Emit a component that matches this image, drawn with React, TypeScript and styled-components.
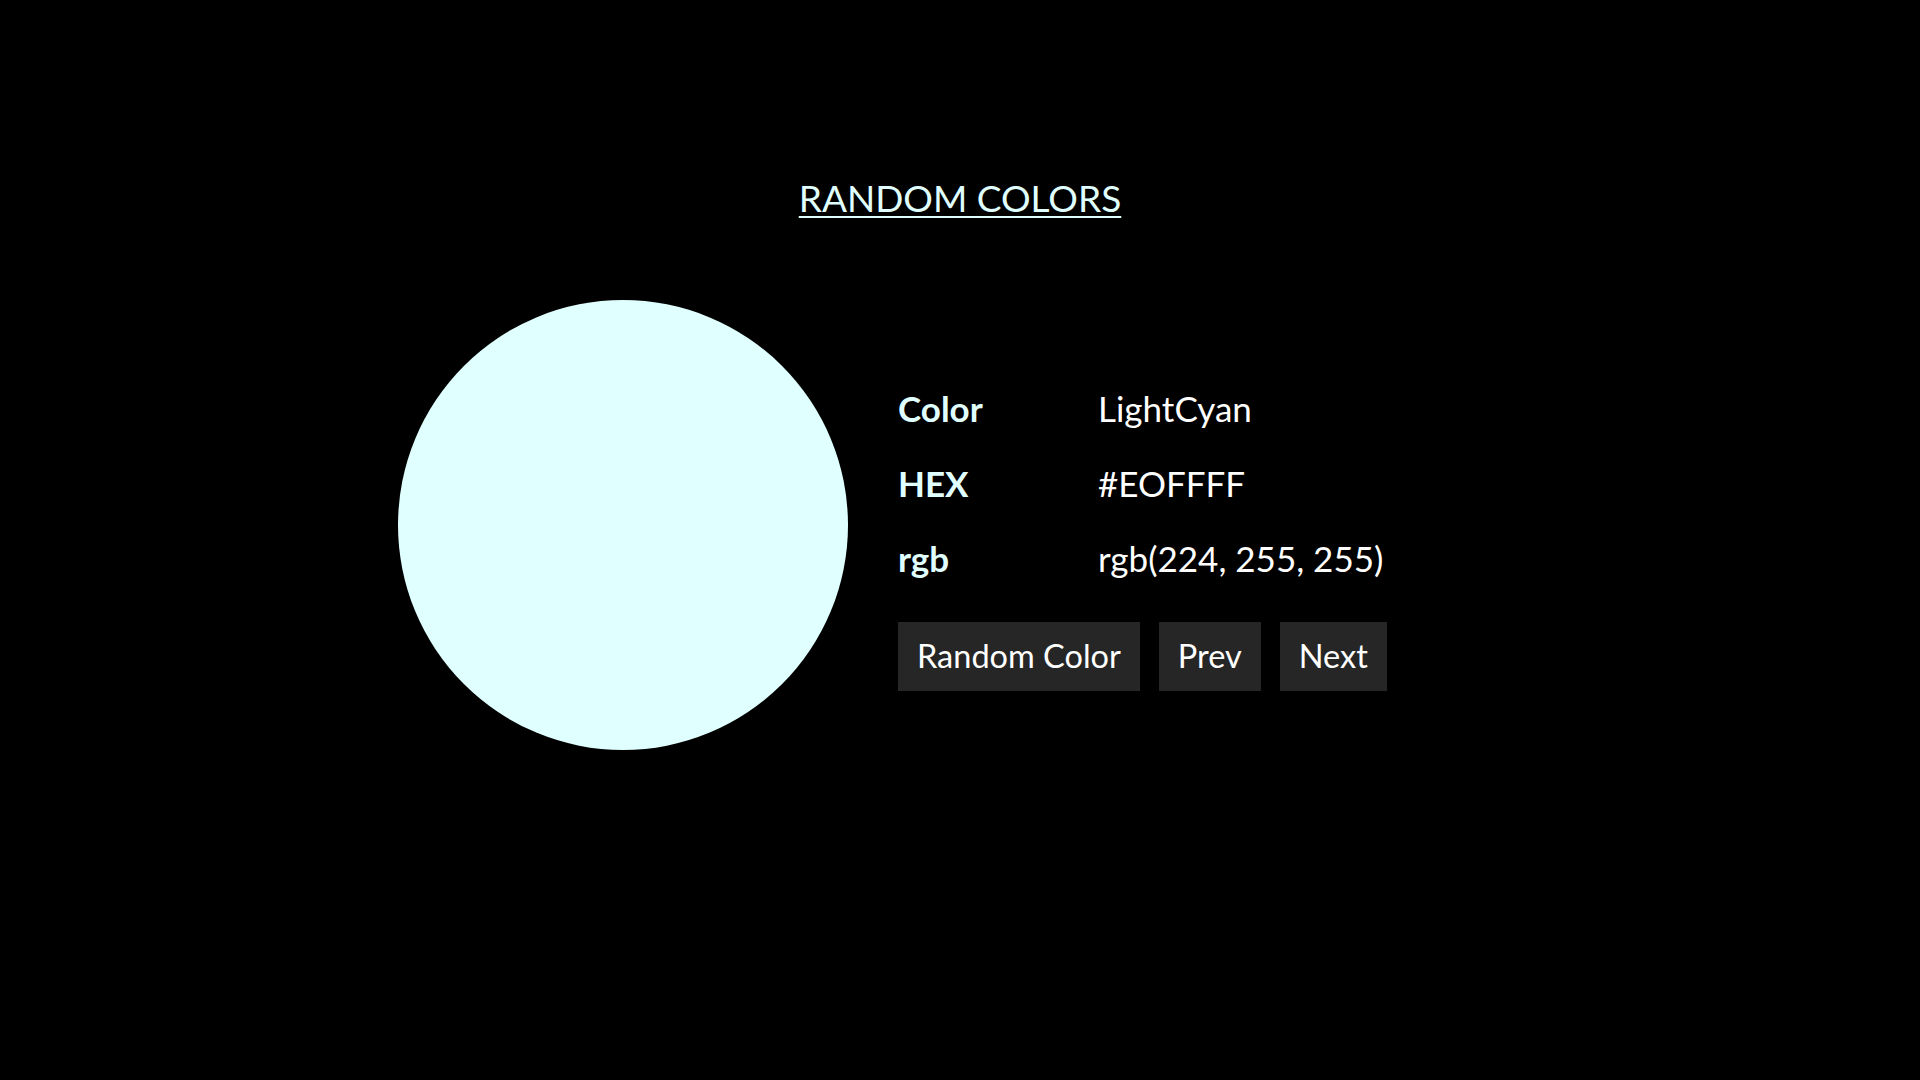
import React from "react";
import styled, { createGlobalStyle } from "styled-components";

const Global = createGlobalStyle`
  html, body { margin: 0; padding: 0; background: #000; }
  body { font-family: Lato, "Open Sans", sans-serif; color: #e0ffff; }
`;

const Page = styled.div`
  width: 1920px;
  min-height: 1080px;
  display: flex;
  flex-direction: column;
  align-items: center;
`;

const Title = styled.h1`
  margin: 176px 0 0;
  font-size: 37px;
  font-weight: 400;
  line-height: 1.2;
  text-decoration: underline;
  text-underline-offset: 4px;
  text-decoration-thickness: 2px;
  color: #e0ffff;
`;

const Content = styled.div`
  width: 1124px;
  margin-top: 80px;
  display: flex;
  gap: 50px;
  align-items: flex-start;
`;

const Swatch = styled.div<{ $color: string }>`
  width: 450px;
  height: 450px;
  border-radius: 50%;
  background: ${(p) => p.$color};
  flex: none;
`;

const Info = styled.div`
  flex: 1;
  padding-top: 70px;
`;

const Table = styled.div`
  display: grid;
  grid-template-columns: 200px auto;
  grid-auto-rows: 75px;
  align-items: center;
  font-size: 35px;
  line-height: 42px;
`;

const Label = styled.div`
  font-weight: 700;
  color: #e0ffff;
`;

const Value = styled.div`
  color: #fff;
`;

const Buttons = styled.div`
  display: flex;
  gap: 19px;
  margin-top: 27px;
`;

const Button = styled.button`
  height: 69px;
  padding: 0 19px 3px;
  border: none;
  background: #262626;
  color: #fff;
  font-family: inherit;
  font-size: 32.5px;
  cursor: pointer;
`;

export default function App() {
  const color = { name: "LightCyan", hex: "#E0FFFF", rgb: "rgb(224, 255, 255)" };
  return (
    <>
      <Global />
      <Page>
        <Title>RANDOM COLORS</Title>
        <Content>
          <Swatch $color={color.hex} />
          <Info>
            <Table>
              <Label>Color</Label>
              <Value>{color.name}</Value>
              <Label>HEX</Label>
              <Value>{color.hex.replace("0", "O")}</Value>
              <Label>rgb</Label>
              <Value>{color.rgb}</Value>
            </Table>
            <Buttons>
              <Button>Random Color</Button>
              <Button>Prev</Button>
              <Button>Next</Button>
            </Buttons>
          </Info>
        </Content>
      </Page>
    </>
  );
}
